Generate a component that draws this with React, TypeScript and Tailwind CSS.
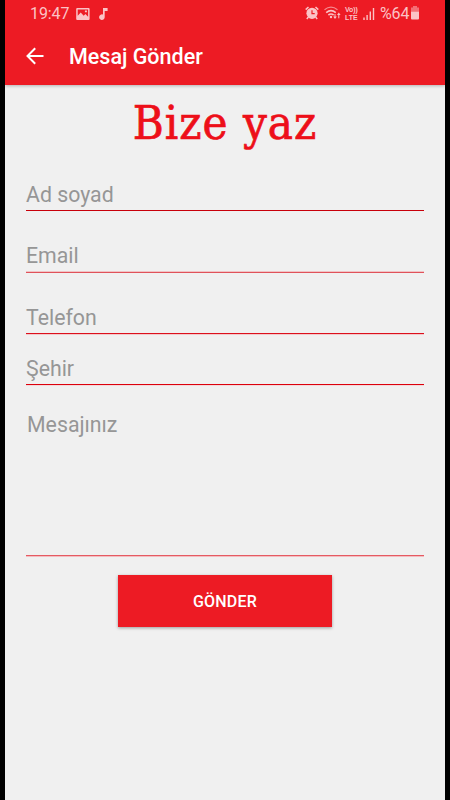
import React from "react";

function StatusBar() {
  return (
    <div className="flex h-7 items-center pl-[25px] text-[#fbc3c6]">
      <span className="w-[46px] text-[16px] leading-7 tracking-[-0.1px]">19:47</span>
      <svg className="h-3 w-[14px]" viewBox="0 0 14 12" fill="currentColor">
        <path fillRule="evenodd" d="M1.2 0h11.4q1 0 1 1v10q0 1-1 1H1.2q-1 0-1-1V1q0-1 1-1Zm.5 1.4v6.3l3-3.1 3 3.2 1.7-1.7 2.7 2.6V1.4Zm7.2 1.1h2v1.8h-2Z" />
      </svg>
      <svg className="ml-[9px] h-3 w-[10px]" viewBox="0 0 10 12" fill="currentColor">
        <path d="M4 0h4.6v3H5.7v6.1a2.8 2.8 0 1 1-1.7-2.5Z" />
      </svg>
      <svg className="-mt-[2px] ml-[196px] h-[14px] w-[14px]" viewBox="0 0 14 14" fill="none" stroke="currentColor">
        <circle cx="7" cy="7.3" r="5.6" fill="currentColor" stroke="none" />
        <path d="M.7 3.6 3.5 1M13.3 3.6 10.5 1M3.2 11.3 1.8 13M10.8 11.3l1.4 1.7" strokeWidth="1.5" />
        <path d="M7 4.2v3.5h2.7" stroke="#ed1b24" strokeWidth="1.2" />
      </svg>
      <svg className="-mt-[2px] ml-[5px] h-[14px] w-[17px]" viewBox="0 0 17 14" fill="none" stroke="currentColor">
        <path d="M.5 3.8q6.5-5.2 13 0" strokeWidth="1.2" opacity=".65" />
        <path d="M2.2 6.6q4.8-3.9 9.6 0M4.4 9q2.6-2 5.2 0" strokeWidth="1.6" />
        <circle cx="7" cy="11" r="1.2" fill="currentColor" stroke="none" />
        <path d="M9.2 10.4h3.6L11 13ZM13 9h3.6l-1.8-2.6Z" fill="currentColor" stroke="none" />
        <path d="M11 8v3M14.8 8.5v3.8" />
      </svg>
      <div className="-mt-px ml-[4px] flex h-[15px] w-[14px] flex-col justify-between font-['Liberation_Sans',sans-serif] text-[7px] font-bold leading-[7px]">
        <span className="block h-[7px] whitespace-nowrap tracking-[-0.1px]">Vo))</span>
        <span className="block h-[7px] whitespace-nowrap">LTE</span>
      </div>
      <svg className="ml-[4px] h-3 w-3" viewBox="0 0 12 12" fill="currentColor">
        <path d="M.3 9.5h1.4V12H.3ZM3.4 7h1.4v5H3.4ZM6.6 3.5H8V12H6.6ZM9.8 0h1.4v12H9.8Z" />
      </svg>
      <span className="ml-[5px] w-[30px] whitespace-nowrap text-[16px] leading-7 tracking-[-0.1px]">%64</span>
      <svg className="-mt-[2px] h-[14px] w-[10px]" viewBox="0 0 10 14" fill="currentColor">
        <path d="M3 0h4v1.6h2v4H1v-4h2Z" opacity=".5" />
        <path d="M1 5.6h8v7q0 1-1 1H2q-1 0-1-1Z" />
      </svg>
    </div>
  );
}

function Field({ label, className, line }: { label: string; className: string; line: string }) {
  return (
    <div className={`flex flex-col justify-between text-[21.3px] leading-[26px] text-[#969696] ${className}`}>
      <span className="h-[26px]">{label}</span>
      <div className={`h-px w-full ${line}`} />
    </div>
  );
}

export default function App() {
  return (
    <div className="flex h-[800px] w-[450px] bg-black px-[5px] font-['Roboto',sans-serif]">
      <div className="flex w-[440px] flex-col bg-[#f0f0f0]">
        <header className="h-[85px] bg-[#ed1b24] shadow-[0_1px_3px_rgba(0,0,0,0.25)]">
          <StatusBar />
          <div className="flex h-[57px] items-center pl-[21px] text-white">
            <svg className="-mt-[2px] h-[18px] w-[18px]" viewBox="0 0 18 18" fill="none" stroke="currentColor" strokeWidth="2">
              <path d="M17.5 9H1.8M9.2 1.2 1.5 9l7.7 7.8" />
            </svg>
            <h1 className="ml-[25px] text-[21.5px] font-medium leading-7">Mesaj Gönder</h1>
          </div>
        </header>
        <h2 className="h-[76px] whitespace-nowrap pt-[8px] text-center font-['DejaVu_Serif_Condensed','DejaVu_Serif',serif] text-[47px] leading-[60px] tracking-[1px] text-[#ed0f19] [-webkit-text-stroke:0.7px_#ed0f19]">
          Bize yaz
        </h2>
        <form className="flex flex-col px-[21px]">
          <Field label="Ad soyad" className="h-[50px] pt-[21px]" line="bg-[#c8000a]" />
          <Field label="Email" className="h-[62px] pt-[32px]" line="bg-[#e0525a] shadow-[0_-1px_0_#f0c4c6]" />
          <Field label="Telefon" className="h-[61px] pt-[32px]" line="bg-[#dc101c] shadow-[0_1px_0_#f3c8ca]" />
          <Field label="Şehir" className="h-[51px] pt-[22px]" line="bg-[#dc000c] shadow-[0_1px_0_#f3d8da]" />
          <Field label="Mesajınız" className="h-[171px] pt-[27px] indent-[1px]" line="bg-[#e55a62] shadow-[0_1px_0_#f3bcc0]" />
          <button
            type="button"
            className="mt-[19px] h-[52px] w-[214px] self-center bg-[#ed1b24] pt-[2px] text-[16px] font-medium tracking-[0.2px] text-white shadow-[0_1px_3px_rgba(0,0,0,0.35)]"
          >
            GÖNDER
          </button>
        </form>
      </div>
    </div>
  );
}
